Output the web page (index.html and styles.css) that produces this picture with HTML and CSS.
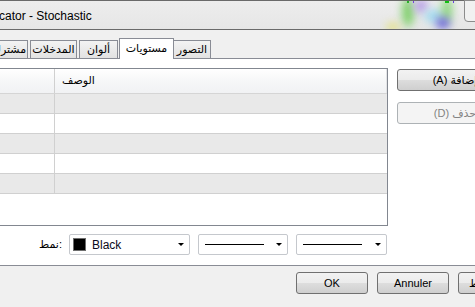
FILE: index.html
```html
<!DOCTYPE html>
<html lang="ar">
<head>
  <meta charset="UTF-8" />
  <title>Custom Indicator - Stochastic</title>
  <link rel="stylesheet" href="styles.css">
</head>
<body>
  <div class="titlebar">
    <span class="title">cator - Stochastic</span>
    <div class="glass">
      <span class="blob b1"></span>
      <span class="blob b2"></span>
      <span class="blob b3"></span>
      <span class="blob b4"></span>
      <span class="blob b5"></span>
      <span class="blob b6"></span>
      <span class="dot d1"></span>
      <span class="dot d2"></span>
      <span class="dot d3"></span>
      <span class="dot d4"></span>
    </div>
    <div class="close-btn"></div>
  </div>

  <div class="client">
    <div class="tabs">
      <div class="tab t-common">مشترك</div>
      <div class="tab t-inputs">المدخلات</div>
      <div class="tab t-colors">ألوان</div>
      <div class="tab t-levels active">مستويات</div>
      <div class="tab t-view">التصور</div>
    </div>

    <div class="panel">
      <div class="panel-main">
        <div class="levels">
          <div class="levels-head">
            <div class="cell c1"></div>
            <div class="cell c2">الوصف</div>
          </div>
          <div class="row odd"><div class="cell c1"></div><div class="cell c2"></div></div>
          <div class="row"><div class="cell c1"></div><div class="cell c2"></div></div>
          <div class="row odd"><div class="cell c1"></div><div class="cell c2"></div></div>
          <div class="row"><div class="cell c1"></div><div class="cell c2"></div></div>
          <div class="row odd"><div class="cell c1"></div><div class="cell c2"></div></div>
        </div>
        <div class="side-buttons">
          <button class="btn side" dir="rtl">إضافة (A)</button>
          <button class="btn side" dir="rtl" disabled>حذف (D)</button>
        </div>
      </div>

      <div class="style-row">
        <span class="style-label">نمط:</span>
        <div class="combo color-combo">
          <span class="swatch"></span>
          <span class="combo-text">Black</span>
          <span class="arrow"></span>
        </div>
        <div class="combo line-combo">
          <span class="line-sample"></span>
          <span class="arrow"></span>
        </div>
        <div class="combo line-combo wide">
          <span class="line-sample"></span>
          <span class="arrow"></span>
        </div>
      </div>
    </div>

    <div class="footer">
      <button class="btn dlg">OK</button>
      <button class="btn dlg">Annuler</button>
      <button class="btn dlg" dir="rtl">إعادة ضبط</button>
    </div>
  </div>

  <div class="desktop"></div>
</body>
</html>
```

FILE: styles.css
```css
body {
  margin: 0;
  width: 475px;
  height: 307px;
  overflow: hidden;
  background: #f0f0f0;
  font-family: 'Liberation Sans', 'DejaVu Sans', sans-serif;
  font-size: 11px;
  color: #000;
}

.titlebar {
  position: relative;
  height: 28px;
  border-top: 1px solid #6a6a6a;
  border-bottom: 1px solid #6a6a6a;
  background: linear-gradient(#ededed, #e6e6e6);
  display: flex;
  align-items: center;
}

.title {
  font-family: 'Liberation Sans', sans-serif;
  font-size: 12px;
  margin-left: -1px;
  padding-top: 2px;
}

.glass {
  position: absolute;
  left: 380px;
  top: 0;
  width: 85px;
  height: 28px;
  overflow: hidden;
}

.blob {
  position: absolute;
  border-radius: 50%;
  filter: blur(4px);
}

.b1 { left: 22px; top: -4px; width: 12px; height: 30px; background: #7fd06a; }
.b2 { left: 34px; top: -2px; width: 14px; height: 14px; background: #b9a0e6; }
.b3 { left: 44px; top: 8px; width: 20px; height: 14px; background: #a6dcef; }
.b4 { left: 62px; top: -4px; width: 10px; height: 26px; background: #8ad67a; }
.b5 { left: 56px; top: 16px; width: 14px; height: 12px; background: #6a62d8; }
.b6 { left: 6px; top: 22px; width: 14px; height: 8px; background: #e4e27a; }

.dot {
  position: absolute;
  top: 0;
  height: 2px;
}

.d1 { left: 27px; width: 2px; background: #2bb02b; }
.d2 { left: 33px; width: 1px; background: #7a3ce0; }
.d3 { left: 65px; width: 4px; background: #11c011; }
.d4 { left: 73px; width: 1px; background: #6a3ce0; }

.close-btn {
  position: absolute;
  left: 464px;
  top: -1px;
  width: 20px;
  height: 20px;
  border: 1px solid #8c8c8c;
  border-radius: 0 0 0 4px;
  background: #f1f1f1;
}

.tabs {
  height: 28px;
  display: flex;
  align-items: flex-end;
  margin-left: -10px;
}

.tab {
  height: 17px;
  line-height: 16px;
  text-align: center;
  border: 1px solid #898c95;
  border-bottom: none;
  background: linear-gradient(#f3f3f3, #e2e2e2);
  white-space: nowrap;
  flex-shrink: 0;
}

.t-common { width: 36px; }
.t-inputs { width: 45px; margin-left: 2px; }
.t-colors { width: 37px; margin-left: 2px; }
.t-view { width: 36px; border-left: none; }

.tab.active {
  position: relative;
  z-index: 1;
  width: 53px;
  height: 20px;
  margin-left: 1px;
  margin-bottom: -1px;
  background: #fff;
  line-height: 18px;
}

.panel {
  background: #fff;
  border-top: 1px solid #898c95;
  border-bottom: 1px solid #898c95;
  padding: 9px 0 10px 0;
}

.panel-main {
  display: flex;
  align-items: flex-start;
}

.levels {
  width: 387px;
  height: 156px;
  flex-shrink: 0;
  margin-left: -1px;
  border: 1px solid #828790;
}

.levels-head {
  display: flex;
  height: 24px;
  border-bottom: 1px solid #d5d5d5;
  background: linear-gradient(#ffffff, #f6f7f8 50%, #f1f2f4);
}

.levels-head .cell {
  border-right: 1px solid #e3e4e6;
  line-height: 22px;
}

.row {
  display: flex;
  height: 19px;
  border-bottom: 1px solid #d0d0d0;
}

.row.odd {
  background: #e9e9e9;
}

.cell.c1 {
  width: 54px;
  border-right: 1px solid #d0d0d0;
}

.cell.c2 {
  flex: 1;
  padding-left: 7px;
}

.side-buttons {
  display: flex;
  flex-direction: column;
  gap: 11px;
  margin-left: 9px;
  margin-top: 1px;
  flex-shrink: 0;
}

.btn {
  font-family: 'Liberation Sans', 'DejaVu Sans', sans-serif;
  font-size: 11px;
  color: #000;
  height: 22px;
  padding: 0;
  border: 1px solid #707070;
  border-radius: 3px;
  background: linear-gradient(#f2f2f2, #ebebeb 50%, #dddddd 51%, #cfcfcf);
  white-space: nowrap;
}

.btn.side {
  width: 116px;
  flex-shrink: 0;
}

.btn:disabled {
  border-color: #adb2b5;
  background: #f4f4f4;
  color: #838383;
}

.style-row {
  width: 387px;
  height: 21px;
  margin-top: 8px;
  display: flex;
  justify-content: flex-end;
  align-items: center;
  gap: 8px;
}

.style-label {
  margin-right: -1px;
}

.combo {
  height: 19px;
  border: 1px solid #c5c8cd;
  border-radius: 2px;
  background: #fff;
  display: flex;
  align-items: center;
  position: relative;
}

.color-combo {
  width: 119px;
}

.swatch {
  width: 11px;
  height: 11px;
  background: #000;
  border: 1px solid #6d6d6d;
  margin-left: 3px;
}

.combo-text {
  margin-left: 6px;
  color: #0a0a20;
  font-size: 12px;
}

.arrow {
  position: absolute;
  right: 5px;
  top: 8px;
  width: 0;
  height: 0;
  border-left: 3px solid transparent;
  border-right: 3px solid transparent;
  border-top: 3px solid #000;
}

.line-combo {
  width: 88px;
}

.line-combo.wide {
  width: 89px;
}

.line-sample {
  width: 59px;
  height: 1px;
  background: #000;
  margin-left: 6px;
}

.footer {
  height: 37px;
  display: flex;
  align-items: flex-start;
  padding: 6px 0 0 296px;
  gap: 9px;
}

.btn.dlg {
  width: 72px;
  flex-shrink: 0;
}

.desktop {
  height: 4px;
  border-top: 1px solid #6a6a6a;
  background: linear-gradient(90deg, #cfcfcf, #d9c9c9 30%, #d4d4d4 60%, #cccccc);
}
```
